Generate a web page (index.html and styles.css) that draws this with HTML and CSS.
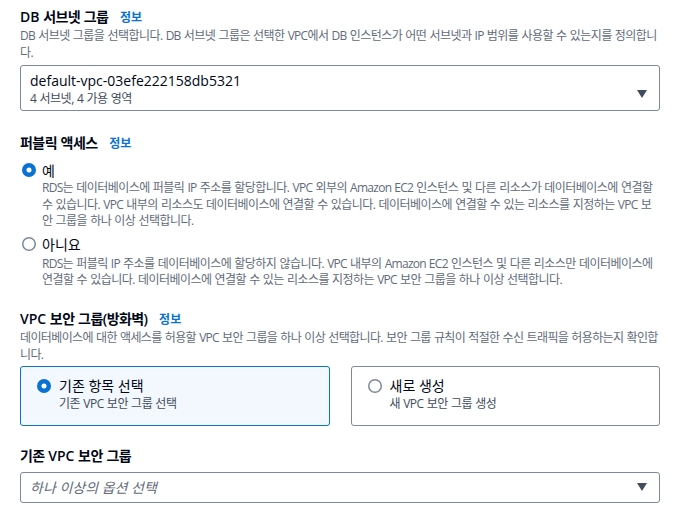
FILE: index.html
```html
<!DOCTYPE html>
<html lang="ko">
<head>
<meta charset="utf-8">
<link rel="stylesheet" href="styles.css">
</head>
<body>
<div class="page">
  <section class="field first">
    <div class="label"><span class="l">DB</span> 서브넷 그룹 <a class="info">정보</a></div>
    <div class="desc"><span class="l">DB</span> 서브넷 그룹을 선택합니다. <span class="l">DB</span> 서브넷 그룹은 선택한 <span class="l">VPC</span>에서 <span class="l">DB</span> 인스턴스가 어떤 서브넷과 <span class="l">IP</span> 범위를 사용할 수 있는지를 정의합니다.</div>
    <div class="select tall">
      <div class="select-text">
        <div class="value">default-vpc-03efe222158db5321</div>
        <div class="sub">4 서브넷, 4 가용 영역</div>
      </div>
      <span class="caret"></span>
    </div>
  </section>

  <section class="field public">
    <div class="label">퍼블릭 액세스 <a class="info">정보</a></div>
    <div class="radio-item">
      <div class="radio-row">
        <svg class="radio" viewBox="0 0 16 16"><circle cx="8" cy="8" r="4.75" fill="#fff" stroke="#0972d3" stroke-width="4.5"/></svg>
        <span class="radio-label">예</span>
      </div>
      <div class="radio-desc"><span class="l">RDS</span>는 데이터베이스에 퍼블릭 <span class="l">IP</span> 주소를 할당합니다. <span class="l">VPC</span> 외부의 <span class="l">Amazon EC2</span> 인스턴스 및 다른 리소스가 데이터베이스에 연결할 수 있습니다. <span class="l">VPC</span> 내부의 리소스도 데이터베이스에 연결할 수 있습니다. 데이터베이스에 연결할 수 있는 리소스를 지정하는 <span class="l">VPC</span> 보안 그룹을 하나 이상 선택합니다.</div>
    </div>
    <div class="radio-item second">
      <div class="radio-row">
        <svg class="radio" viewBox="0 0 16 16"><circle cx="8" cy="8" r="6.25" fill="#fff" stroke="#7d8998" stroke-width="1.5"/></svg>
        <span class="radio-label">아니요</span>
      </div>
      <div class="radio-desc"><span class="l">RDS</span>는 퍼블릭 <span class="l">IP</span> 주소를 데이터베이스에 할당하지 않습니다. <span class="l">VPC</span> 내부의 <span class="l">Amazon EC2</span> 인스턴스 및 다른 리소스만 데이터베이스에 연결할 수 있습니다. 데이터베이스에 연결할 수 있는 리소스를 지정하는 <span class="l">VPC</span> 보안 그룹을 하나 이상 선택합니다.</div>
    </div>
  </section>

  <section class="field vpc">
    <div class="label"><span class="l">VPC</span> 보안 그룹(방화벽) <a class="info">정보</a></div>
    <div class="desc tight">데이터베이스에 대한 액세스를 허용할 <span class="l">VPC</span> 보안 그룹을 하나 이상 선택합니다. 보안 그룹 규칙이 적절한 수신 트래픽을 허용하는지 확인합니다.</div>
    <div class="tiles">
      <div class="tile selected">
        <svg class="radio" viewBox="0 0 16 16"><circle cx="8" cy="8" r="4.75" fill="#fff" stroke="#0972d3" stroke-width="4.5"/></svg>
        <div>
          <div class="tile-title">기존 항목 선택</div>
          <div class="tile-sub">기존 <span class="l">VPC</span> 보안 그룹 선택</div>
        </div>
      </div>
      <div class="tile">
        <svg class="radio" viewBox="0 0 16 16"><circle cx="8" cy="8" r="6.25" fill="#fff" stroke="#7d8998" stroke-width="1.5"/></svg>
        <div>
          <div class="tile-title">새로 생성</div>
          <div class="tile-sub">새 <span class="l">VPC</span> 보안 그룹 생성</div>
        </div>
      </div>
    </div>
  </section>

  <section class="field existing">
    <div class="label">기존 <span class="l">VPC</span> 보안 그룹</div>
    <div class="select short">
      <span class="placeholder">하나 이상의 옵션 선택</span>
      <span class="caret"></span>
    </div>
  </section>
</div>
</body>
</html>
```

FILE: styles.css
```css
* { box-sizing: border-box; }
html, body { margin: 0; padding: 0; background: #ffffff; }
body {
  font-family: "Open Sans", "Noto Sans CJK KR", sans-serif;
  color: #000716;
  -webkit-font-smoothing: antialiased;
}
.page {
  width: 678px;
  padding: 0 18px 0 20px;
}
.field { display: flex; flex-direction: column; }
.first { padding-top: 7px; }
.label {
  font-size: 14px;
  line-height: 19px;
  font-weight: 600;
  letter-spacing: -0.04em;
  word-spacing: 0.04em;
}
.label .l { letter-spacing: 0; }
.info {
  font-size: 12px;
  font-weight: 700;
  color: #0972d3;
  margin-left: 8px;
  letter-spacing: 0;
}
.desc, .radio-desc {
  font-size: 12px;
  color: #5f6b7a;
  letter-spacing: -0.045em;
  word-spacing: 0.045em;
}
.desc.tight {
  letter-spacing: -0.052em;
  word-spacing: 0.052em;
}
.desc .l, .radio-desc .l { letter-spacing: -0.06em; }
.desc { line-height: 17px; }
.select {
  border: 1px solid #7d8998;
  border-radius: 3px;
  display: flex;
  align-items: center;
  justify-content: space-between;
  padding: 0 12px 0 9px;
}
.select.tall {
  height: 46px;
  margin-top: 4px;
  align-items: flex-start;
  padding-top: 5px;
}
.select.tall .caret { margin-top: 19px; }
.value { font-size: 14px; line-height: 20px; }
.sub { font-size: 12px; line-height: 16px; color: #414d5c; letter-spacing: -0.04em; word-spacing: 0.04em; }
.caret {
  width: 0; height: 0;
  border-left: 5px solid transparent;
  border-right: 5px solid transparent;
  border-top: 8px solid #414d5c;
}
.public { margin-top: 22px; }
.radio-item { margin-top: 7px; }
.radio-item.second { margin-top: 4px; }
.radio-item.second .radio-desc { padding-top: 2px; }
.radio-row {
  display: flex;
  align-items: center;
  height: 20px;
}
.radio { width: 16px; height: 16px; flex: none; margin-left: 1px; }
.radio-label { font-size: 14px; margin-left: 5px; }
.radio-desc {
  padding-left: 22px;
  line-height: 16.5px;
}
.vpc { margin-top: 20px; }
.tiles {
  display: grid;
  grid-template-columns: 1fr 1fr;
  gap: 21px;
  margin-top: 3px;
}
.tile {
  border: 1px solid #7d8998;
  border-radius: 3px;
  height: 60px;
  display: flex;
  align-items: flex-start;
  padding: 9px 14px;
  gap: 7px;
}
.tile .radio { margin-top: 2px; }
.tile.selected {
  border-color: #0972d3;
  background: #f2f8fd;
}
.tile-title { font-size: 14px; line-height: 20px; }
.tile-sub { font-size: 12px; line-height: 16px; color: #414d5c; letter-spacing: -0.04em; word-spacing: 0.04em; }
.existing { margin-top: 20px; }
.select.short {
  height: 31px;
  margin-top: 7px;
}
.placeholder {
  font-size: 14px;
  font-style: italic;
  color: #5f6b7a;
}
```
